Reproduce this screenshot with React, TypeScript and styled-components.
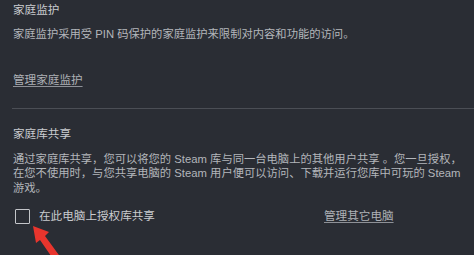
import React, { FC } from 'react';
import styled, { createGlobalStyle } from 'styled-components';

const GlobalStyle = createGlobalStyle`
  html, body {
    margin: 0;
    padding: 0;
    background: #2a2d34;
  }
  body {
    font-family: "Liberation Sans", "Noto Sans CJK SC", sans-serif;
    -webkit-font-smoothing: antialiased;
  }
`;

const Page = styled.div`
  position: relative;
  width: 474px;
  height: 255px;
  overflow: hidden;
  background: #2a2d34;
  padding-left: 13px;
  box-sizing: border-box;
`;

const Title = styled.div<{ $top: number }>`
  margin-top: ${({ $top }) => $top}px;
  font-size: 11.6px;
  line-height: 14px;
  color: #c9cbcf;
  white-space: nowrap;
`;

const Text = styled.div<{ $top: number }>`
  margin-top: ${({ $top }) => $top}px;
  font-size: 11.3px;
  line-height: 14.5px;
  color: #b3b6bb;
  white-space: nowrap;
`;

const Link = styled.a<{ $top?: number }>`
  display: block;
  width: max-content;
  margin-top: ${({ $top = 0 }) => $top}px;
  font-size: 11.6px;
  line-height: 14px;
  color: #aeb1b6;
  text-decoration: underline;
  text-decoration-color: #8e9197;
  text-underline-offset: 2px;
  white-space: nowrap;
  cursor: pointer;
`;

const Divider = styled.hr`
  margin: 21px 0 0 -1px;
  border: 0;
  height: 1px;
  background: #4b4e55;
`;

const CheckRow = styled.div`
  margin-top: 13px;
  display: grid;
  grid-template-columns: 311px 1fr;
  align-items: center;
  height: 16px;
`;

const CheckLabel = styled.label`
  display: flex;
  align-items: center;
  gap: 9px;
  margin-left: 2px;
  font-size: 11.6px;
  line-height: 14px;
  color: #c9cbcf;
  white-space: nowrap;
`;

const Box = styled.span`
  width: 15px;
  height: 15px;
  box-sizing: border-box;
  border: 1.5px solid #c3c5c9;
  border-radius: 1px;
`;

const Arrow = styled.svg`
  position: absolute;
  left: 0;
  top: 0;
  pointer-events: none;
`;

const App: FC = () => {
  return (
    <Page>
      <GlobalStyle />
      <Title $top={3}>家庭监护</Title>
      <Text $top={10}>家庭监护采用受 PIN 码保护的家庭监护来限制对内容和功能的访问。</Text>
      <Link $top={31}>管理家庭监护</Link>
      <Divider />

      <Title $top={18}>家庭库共享</Title>
      <Text $top={11}>
        通过家庭库共享，您可以将您的 Steam 库与同一台电脑上的其他用户共享 。您一旦授权，
        <br />
        在您不使用时，与您共享电脑的 Steam 用户便可以访问、下载并运行您库中可玩的 Steam
        <br />
        游戏。
      </Text>

      <CheckRow>
        <CheckLabel>
          <Box />
          在此电脑上授权库共享
        </CheckLabel>
        <Link>管理其它电脑</Link>
      </CheckRow>

      <Arrow width="474" height="255" viewBox="0 0 474 255">
        <polygon
          points="33,226 49,232 45,236 64,262 58,266 40,240 36,243"
          fill="#e8352d"
        />
      </Arrow>
    </Page>
  );
};

export default App;
